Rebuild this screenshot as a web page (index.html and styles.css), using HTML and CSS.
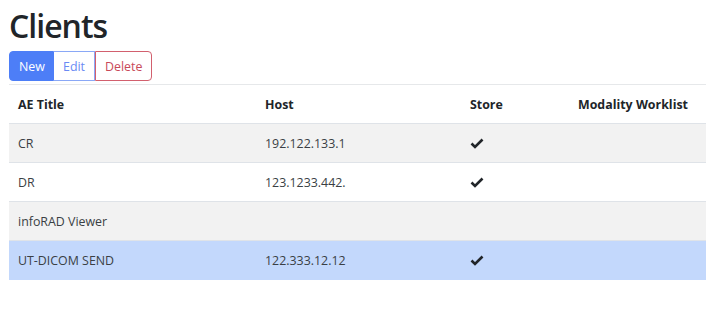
FILE: index.html
```html
<!DOCTYPE html>
<html>
<head>
<meta charset="utf-8">
<link rel="stylesheet" href="styles.css">
</head>
<body>
<div class="page">
  <h1 class="title">Clients</h1>
  <div class="btn-group">
    <button class="btn btn-new">New</button>
    <button class="btn btn-edit">Edit</button>
    <button class="btn btn-delete">Delete</button>
  </div>
  <table class="table">
    <colgroup>
      <col class="c1"><col class="c2"><col class="c3"><col class="c4">
    </colgroup>
    <thead>
      <tr><th>AE Title</th><th>Host</th><th>Store</th><th>Modality Worklist</th></tr>
    </thead>
    <tbody>
      <tr class="odd"><td>CR</td><td>192.122.133.1</td><td><svg class="check" viewBox="0 0 14 11" width="14" height="11"><path d="M1.5 5.5 L5 9 L12.5 1.5" fill="none" stroke="#212529" stroke-width="2.6"/></svg></td><td></td></tr>
      <tr><td>DR</td><td>123.1233.442.</td><td><svg class="check" viewBox="0 0 14 11" width="14" height="11"><path d="M1.5 5.5 L5 9 L12.5 1.5" fill="none" stroke="#212529" stroke-width="2.6"/></svg></td><td></td></tr>
      <tr class="odd"><td>infoRAD Viewer</td><td></td><td></td><td></td></tr>
      <tr class="selected"><td>UT-DICOM SEND</td><td>122.333.12.12</td><td><svg class="check" viewBox="0 0 14 11" width="14" height="11"><path d="M1.5 5.5 L5 9 L12.5 1.5" fill="none" stroke="#212529" stroke-width="2.6"/></svg></td><td></td></tr>
    </tbody>
  </table>
</div>
</body>
</html>
```
FILE: styles.css
```css
html, body {
  margin: 0;
  padding: 0;
  background: #fff;
}
body {
  font-family: "Open Sans", "Noto Sans", sans-serif;
  font-size: 12.4px;
  color: #212529;
}
.page {
  padding: 0 0 0 9px;
}
.title {
  margin: 0;
  padding-top: 6px;
  font-size: 32px;
  line-height: 40px;
  font-weight: 600;
  letter-spacing: -1px;
  color: #212529;
}
.btn-group {
  display: flex;
  margin-top: 5px;
  height: 30px;
}
.btn {
  font-family: inherit;
  font-size: 12.4px;
  height: 30px;
  padding: 0 9px;
  background: #fff;
  border: 1px solid;
  margin: 0;
  cursor: pointer;
}
.btn-new {
  width: 45px;
  background: #4d7ef7;
  border-color: #4d7ef7;
  color: #fff;
  border-radius: 4px 0 0 4px;
}
.btn-edit {
  width: 41px;
  color: #6a8af4;
  border-color: #8aa8f6;
  border-left: none;
}
.btn-delete {
  width: 57px;
  color: #c8495a;
  border-color: #d2606e;
  border-radius: 0 4px 4px 0;
}
.table {
  margin-top: 3px;
  width: 697px;
  border-collapse: collapse;
  table-layout: fixed;
  border-top: 1px solid #e6e8ea;
}
.c1 { width: 247px; }
.c2 { width: 205px; }
.c3 { width: 108px; }
th, td {
  text-align: left;
  padding: 0 9px;
  height: 38px;
  border-bottom: 1px solid #dfe3e8;
  white-space: nowrap;
}
th {
  font-weight: 700;
  color: #212529;
}
td {
  color: #3a3f44;
}
tr.odd td {
  background: #f2f2f2;
}
tr.selected td {
  background: #c3d8fc;
  border-bottom-color: #c3d8fc;
}
.check {
  display: block;
}
```
